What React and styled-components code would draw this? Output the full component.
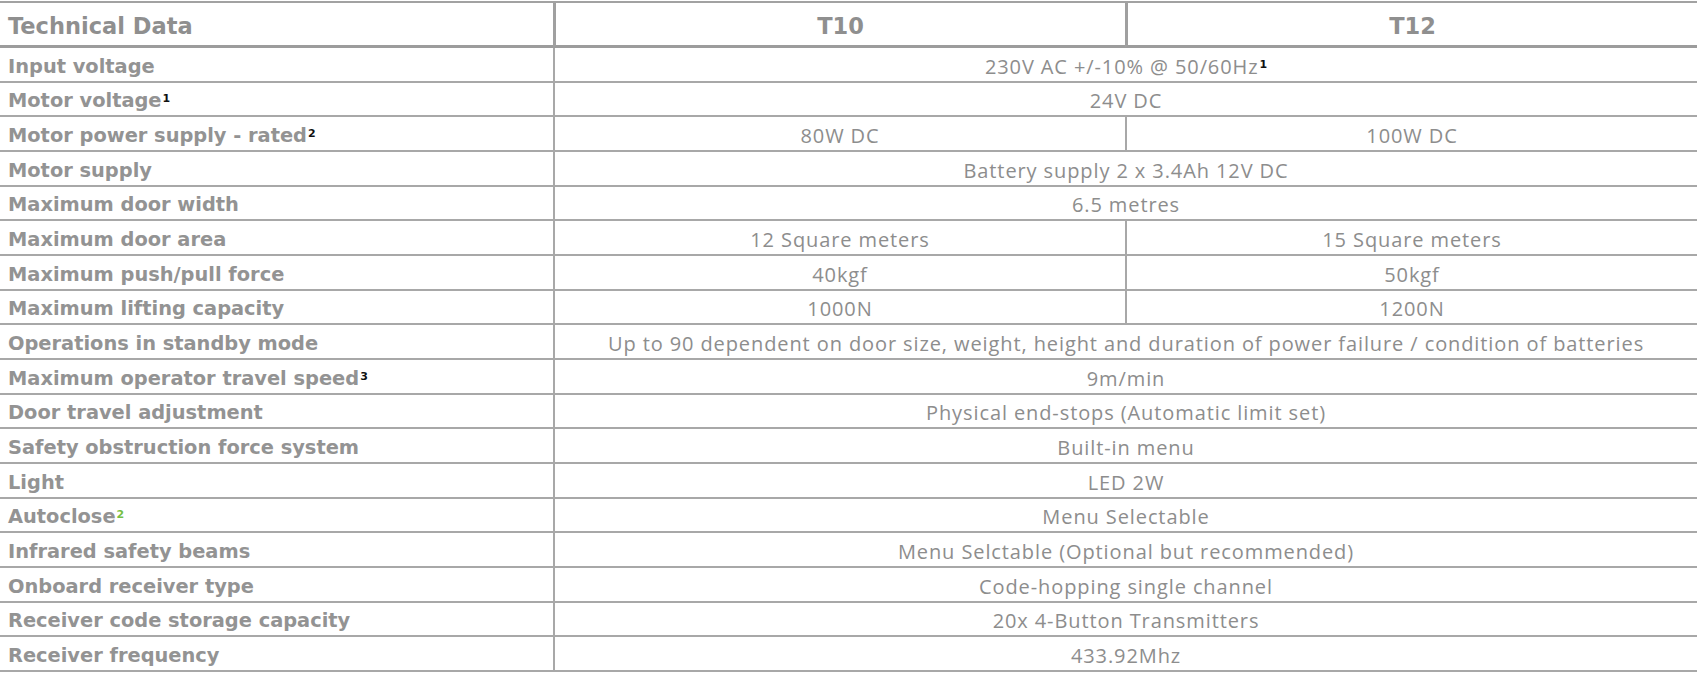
import React from 'react'
import styled, { createGlobalStyle } from 'styled-components'

const GlobalStyle = createGlobalStyle`
  html, body {
    margin: 0;
    padding: 0;
    background: #ffffff;
  }
  body {
    font-family: "Open Sans", Lato, sans-serif;
  }
`

const rows = [
  { label: 'Input voltage', value: '230V AC +/-10% @ 50/60Hz', valueSup: '1' },
  { label: 'Motor voltage', sup: '1', value: '24V DC' },
  { label: 'Motor power supply - rated', sup: '2', t10: '80W DC', t12: '100W DC' },
  { label: 'Motor supply', value: 'Battery supply 2 x 3.4Ah 12V DC' },
  { label: 'Maximum door width', value: '6.5 metres' },
  { label: 'Maximum door area', t10: '12 Square meters', t12: '15 Square meters' },
  { label: 'Maximum push/pull force', t10: '40kgf', t12: '50kgf' },
  { label: 'Maximum lifting capacity', t10: '1000N', t12: '1200N' },
  {
    label: 'Operations in standby mode',
    value:
      'Up to 90 dependent on door size, weight, height and duration of power failure / condition of batteries',
  },
  { label: 'Maximum operator travel speed', sup: '3', value: '9m/min' },
  { label: 'Door travel adjustment', value: 'Physical end-stops (Automatic limit set)' },
  { label: 'Safety obstruction force system', value: 'Built-in menu' },
  { label: 'Light', value: 'LED 2W' },
  { label: 'Autoclose', sup: '2', supGreen: true, value: 'Menu Selectable' },
  { label: 'Infrared safety beams', value: 'Menu Selctable (Optional but recommended)' },
  { label: 'Onboard receiver type', value: 'Code-hopping single channel' },
  { label: 'Receiver code storage capacity', value: '20x 4-Button Transmitters' },
  { label: 'Receiver frequency', value: '433.92Mhz' },
]

const Page = styled.div`
  padding-top: 1px;
  width: 1697px;
  overflow: hidden;
`

const Table = styled.div`
  display: grid;
  grid-template-columns: 553px 572px 572px;
  border-top: 2px solid #a2a2a2;
`

const HeadCell = styled.div`
  box-sizing: border-box;
  height: 45px;
  display: flex;
  align-items: center;
  justify-content: ${({ $center }) => ($center ? 'center' : 'flex-start')};
  padding: 3px 0 0 ${({ $center }) => ($center ? '0' : '8px')};
  border-bottom: 3px solid #9c9c9c;
  border-left: ${({ $divider }) => ($divider ? '3px solid #a0a0a0' : 'none')};
  color: #8f8f8f;
  font-family: "DejaVu Sans", Verdana, sans-serif;
  font-weight: 700;
  font-size: 22.5px;
`

const LabelCell = styled.div`
  box-sizing: border-box;
  height: 34.67px;
  display: flex;
  align-items: center;
  padding: 4px 0 0 8px;
  border-bottom: 2px solid #a8a8a8;
  color: #939393;
  font-family: "DejaVu Sans", Verdana, sans-serif;
  font-weight: 700;
  font-size: 19.4px;
  white-space: nowrap;
`

const ValueCell = styled.div`
  box-sizing: border-box;
  height: 34.67px;
  display: flex;
  align-items: center;
  justify-content: center;
  padding-top: 4px;
  grid-column: ${({ $span }) => ($span ? 'span 2' : 'auto')};
  border-bottom: 2px solid #a8a8a8;
  border-left: 2px solid #a8a8a8;
  color: #8d8d8d;
  font-size: 20px;
  letter-spacing: 0.9px;
  white-space: nowrap;
`

const Sup = styled.sup`
  font-family: "DejaVu Sans", Verdana, sans-serif;
  font-size: 11px;
  font-weight: 700;
  color: ${({ $green }) => ($green ? '#76c043' : '#111111')};
  position: relative;
  top: -2px;
  margin-left: 1px;
  letter-spacing: 0;
`

export default function App() {
  return (
    <>
      <GlobalStyle />
      <Page>
        <Table>
          <HeadCell>Technical Data</HeadCell>
          <HeadCell $center $divider>
            T10
          </HeadCell>
          <HeadCell $center $divider>
            T12
          </HeadCell>
          {rows.map((row) => (
            <React.Fragment key={row.label}>
              <LabelCell>
                {row.label}
                {row.sup && <Sup $green={row.supGreen}>{row.sup}</Sup>}
              </LabelCell>
              {row.value ? (
                <ValueCell $span>
                  {row.value}
                  {row.valueSup && <Sup>{row.valueSup}</Sup>}
                </ValueCell>
              ) : (
                <>
                  <ValueCell>{row.t10}</ValueCell>
                  <ValueCell>{row.t12}</ValueCell>
                </>
              )}
            </React.Fragment>
          ))}
        </Table>
      </Page>
    </>
  )
}
